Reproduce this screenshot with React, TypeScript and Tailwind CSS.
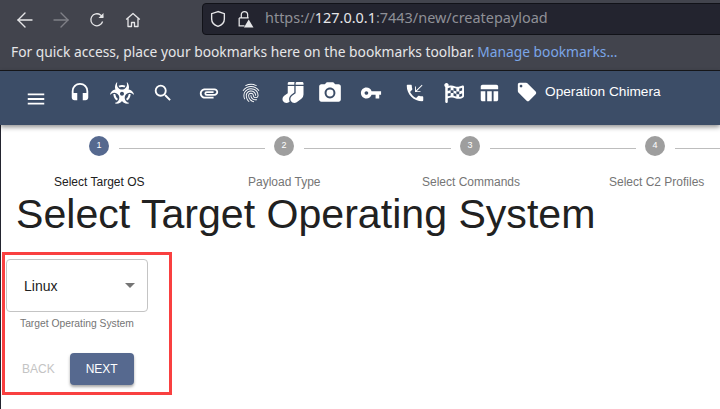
import { FaBiohazard, FaSocks, FaFlagCheckered } from "react-icons/fa";
import {
  MdHeadset, MdSearch, MdAttachment, MdFingerprint, MdPhotoCamera, MdVpnKey,
  MdPhoneCallback, MdTableChart, MdLocalOffer, MdMenu,
} from "react-icons/md";
import { FiArrowLeft, FiArrowRight } from "react-icons/fi";

const firaStack = "font-['Noto_Sans','Open_Sans',sans-serif]";

function Step({ n, active, w }: { n: number; active?: boolean; w: string }) {
  return (
    <div className={`flex items-center h-5 shrink-0 ${w}`}>
      <div className={`w-5 h-5 shrink-0 rounded-full flex items-center justify-center text-[9px] text-white ${active ? "bg-[#56698f]" : "bg-[#9e9e9e]"}`}>{n}</div>
      <div className="h-px flex-1 bg-[#bdbdbd] ml-[10px] mr-[9px] mt-[4px]" />
    </div>
  );
}

export default function App() {
  return (
    <div className="w-[720px] h-[409px] overflow-hidden bg-white font-['Liberation_Sans',sans-serif]">
      <div className={`h-[71px] bg-[#42444d] border-b border-[#17181c] ${firaStack}`}>
        <div className="h-[35px] flex items-center relative">
          <FiArrowLeft strokeWidth={1.4} className="absolute left-[13px] top-[8px] w-[24px] h-[24px] text-[#e6e6e8]" />
          <FiArrowRight strokeWidth={1.4} className="absolute left-[49px] top-[8px] w-[24px] h-[24px] text-[#7f8087]" />
          <svg className="absolute left-[89px] top-[12px]" width="16" height="16" viewBox="0 0 16 16" fill="none" stroke="#e6e6e8" strokeWidth="1.3">
            <path d="M13.6 9.5A6 6 0 1 1 11.5 3L14 5" />
            <path d="M14.5 1v5h-5" fill="#e6e6e8" stroke="none" />
          </svg>
          <svg className="absolute left-[125px] top-[12px]" width="16" height="16" viewBox="0 0 16 16" fill="none" stroke="#e6e6e8" strokeWidth="1.3" strokeLinejoin="round">
            <path d="M1.2 7.5 8 1.5l6.8 6M3 6.5v8h3.5v-4h3v4H13v-8" />
          </svg>
          <div className="ml-[202px] mt-[2px] w-[530px] shrink-0 h-[32px] rounded-[4px] bg-[#23242f] border border-[#111218] flex items-center pl-[6px]">
            <svg width="18" height="18" viewBox="0 0 16 17" fill="none" stroke="#e6e6e8" strokeWidth="1.3">
              <path d="M8 1.5 2 3.5v5c0 3.5 3 6 6 7 3-1 6-3.5 6-7v-5z" />
            </svg>
            <svg className="ml-[9px]" width="18" height="18" viewBox="0 0 16 17" fill="none" stroke="#e6e6e8" strokeWidth="1.2">
              <path d="M4.5 7V4.5a3 3 0 0 1 6 0V7M2.5 7.5h9M2.5 7.5V15h5" />
              <path d="M11.5 9 16 16.5H7z" fill="#e6e6e8" stroke="none" />
            </svg>
            <span className="ml-[11px] text-[14.45px] leading-none text-[#8f9097] whitespace-nowrap">
              https://<span className="text-[#e6e6e8]">127.0.0.1</span>:7443/new/createpayload
            </span>
          </div>
        </div>
        <div className="h-[35px] flex items-center pl-[11px] text-[13.8px] text-[#e6e6e8] whitespace-nowrap">
          For quick access, place your bookmarks here on the bookmarks toolbar.
          <span className="ml-[3px] text-[#7ba6e8]">Manage bookmarks…</span>
        </div>
      </div>

      <div className="h-[54px] bg-[#3c4d67] flex items-start pt-[9px] text-white relative z-10 shadow-[0_2px_5px_rgba(0,0,0,0.45)]">
        <MdMenu className="w-[22px] h-[22px] ml-[25px] mt-[8px] shrink-0" />
        <MdHeadset className="w-[22px] h-[22px] ml-[22px] mt-[2px] shrink-0" />
        <FaBiohazard className="w-[24px] h-[22px] ml-[19px] mt-[2px] shrink-0" />
        <MdSearch className="w-[22px] h-[22px] ml-[18px] mt-[2px] shrink-0" />
        <MdAttachment className="w-[22px] h-[22px] ml-[24px] mt-[2px] shrink-0" />
        <MdFingerprint className="w-[22px] h-[22px] ml-[20px] mt-[2px] shrink-0" />
        <FaSocks className="w-[22px] h-[21px] ml-[20px] mt-[2px] shrink-0" />
        <MdPhotoCamera className="w-[26px] h-[26px] ml-[13px] shrink-0" />
        <MdVpnKey className="w-[22px] h-[22px] ml-[17px] mt-[2px] shrink-0" />
        <MdPhoneCallback className="w-[22px] h-[22px] ml-[22px] mt-[2px] shrink-0" />
        <FaFlagCheckered className="w-[20px] h-[20px] ml-[18px] mt-[3px] shrink-0" />
        <MdTableChart className="w-[22px] h-[22px] ml-[14px] mt-[2px] shrink-0" />
        <MdLocalOffer className="w-[22px] h-[22px] ml-[16px] mt-[1px] shrink-0" />
        <span className="ml-[7px] mt-[2px] text-[13.7px] leading-[20px] whitespace-nowrap">Operation Chimera</span>
      </div>

      <div className="h-[284px] border-l border-[#23242f] flex flex-col">
        <div className="flex pt-[11px] pl-[88px] h-[46px] w-[900px] shrink-0">
          <Step n={1} active w="w-[185px]" />
          <Step n={2} w="w-[186px]" />
          <Step n={3} w="w-[185px]" />
          <Step n={4} w="w-[186px]" />
        </div>
        <div className="flex h-[19px] pt-[3px] pl-[53px] text-[12px] leading-[16px] whitespace-nowrap text-[#757575] shrink-0">
          <span className="text-[#212121] w-[194px]">Select Target OS</span>
          <span className="w-[174px]">Payload Type</span>
          <span className="w-[187px]">Select Commands</span>
          <span>Select C2 Profiles</span>
        </div>
        <h1 className="ml-[15px] text-[41.1px] leading-[48px] text-[#212121] whitespace-nowrap shrink-0">Select Target Operating System</h1>
        <div className="ml-[1px] mt-[14px] w-[170px] h-[143px] border-[3px] border-[#f94040] shrink-0 pl-[1px] pt-[4px]">
          <div className="w-[142px] h-[53px] rounded border border-[#c4c4c4] flex items-center justify-between pl-[17px] pr-[12px] text-[14px] text-[#212121]">
            <span className="mt-[1px]">Linux</span>
            <svg width="10" height="5" viewBox="0 0 10 5"><path d="M0 0h10L5 5z" fill="#757575" /></svg>
          </div>
          <div className="mt-[5px] ml-[14px] text-[10.3px] leading-[14px] text-[#757575] whitespace-nowrap">Target Operating System</div>
          <div className="mt-[22px] flex items-start">
            <span className="ml-[16px] mt-[8px] text-[12px] leading-[16px] text-[#c4c4c4]">BACK</span>
            <div className="ml-[15px] w-[64px] h-[32px] rounded bg-[#56698f] flex items-center justify-center text-[12px] text-white shadow-[0_2px_3px_rgba(0,0,0,0.35)]">NEXT</div>
          </div>
        </div>
      </div>
    </div>
  );
}
